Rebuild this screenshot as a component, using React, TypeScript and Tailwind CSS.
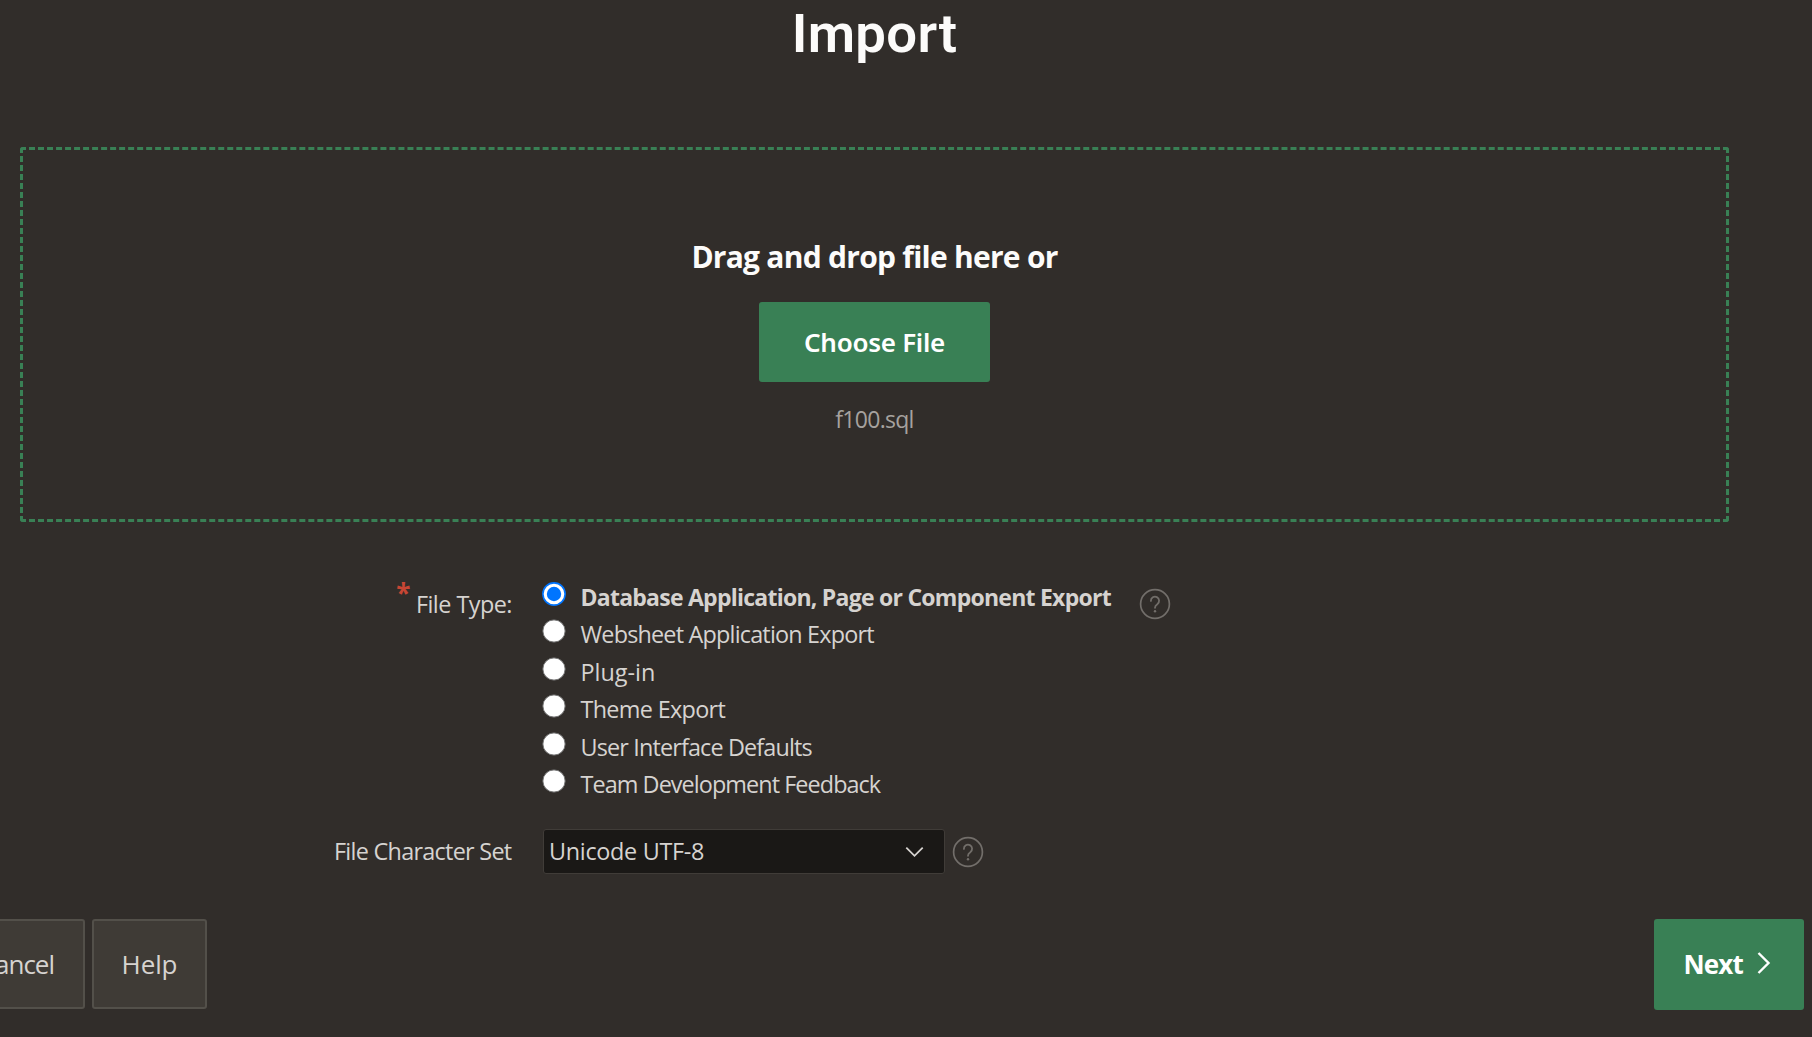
import type { ReactNode } from 'react';

function HelpIcon() {
  return (
    <svg width="32" height="32" viewBox="0 0 32 32" fill="none" stroke="#726e6a" className="shrink-0">
      <circle cx="16" cy="16" r="14.4" strokeWidth="1.7" />
      <path d="M11.9 12.9 a4.1 4.1 0 1 1 6.4 3.3 c-1.5 1-2.3 1.6-2.3 3.6" strokeWidth="1.8" strokeLinecap="round" />
      <circle cx="16" cy="23.3" r="1.2" fill="#726e6a" stroke="none" />
    </svg>
  );
}

function Radio({ checked }: { checked?: boolean }) {
  return (
    <svg width="24" height="24" viewBox="0 0 24 24" className="shrink-0">
      <circle cx="12" cy="12" r="11.1" fill="#fff" stroke={checked ? '#0075ff' : '#767676'} strokeWidth={checked ? 1.6 : 1} />
      {checked && <circle cx="12" cy="12" r="7.2" fill="#0075ff" />}
    </svg>
  );
}

function Option({ height, checked, children }: { height: string; checked?: boolean; children: ReactNode }) {
  return (
    <label className={`flex items-start ${height}`}>
      <Radio checked={checked} />
      <span className="ml-[14.5px] pt-[2px] leading-[26px]">{children}</span>
    </label>
  );
}

export default function App() {
  return (
    <main className="flex h-[1037px] w-[1812px] flex-col overflow-hidden bg-[#312d2a] font-['Open_Sans','Noto_Sans',sans-serif] text-[23.4px] whitespace-nowrap text-[#d6d3d0]">
      <h1 className="h-[147px] w-[1749px] pt-[2px] text-center font-['Roboto',sans-serif] text-[54.5px] leading-[62px] font-semibold tracking-[0.3px] text-[#fcfbfa]">
        Import
      </h1>

      <section className="ml-5 flex h-[375px] w-[1709px] flex-col items-center rounded-[3px] border-[3px] border-dashed border-[#398055] pt-[87px]">
        <p className="text-[30px] leading-[40px] font-bold tracking-[-0.74px] text-[#fcfbfa]">Drag and drop file here or</p>
        <button className="mt-[25px] h-20 w-[231px] rounded-[3px] bg-[#398055] text-center font-['Noto_Sans',sans-serif] text-[26px] leading-[79px] font-semibold tracking-[-0.28px] text-white">
          Choose File
        </button>
        <p className="mt-[22px] text-[23px] leading-[30px] tracking-[-0.7px] text-[#a6a29f]">f100.sql</p>
      </section>

      <section className="flex h-[307px] pt-[60px]">
        <div className="flex w-[542px] justify-end pr-[30px] leading-[32px] tracking-[-0.52px]">
          <span className="mr-[6px] text-[26px] leading-[22px] font-bold text-[#c74634]">*</span>
          <span className="pt-[6px]">File Type:</span>
        </div>
        <div className="w-[570px]">
          <Option height="h-[37px]" checked>
            <b className="text-[23px] tracking-[-0.75px]">Database Application, Page or Component Export</b>
          </Option>
          <Option height="h-[38px]"><span className="tracking-[-0.8px]">Websheet Application Export</span></Option>
          <Option height="h-[37px]"><span className="tracking-[0px]">Plug-in</span></Option>
          <Option height="h-[38px]"><span className="tracking-[-0.68px]">Theme Export</span></Option>
          <Option height="h-[37px]"><span className="tracking-[-0.85px]">User Interface Defaults</span></Option>
          <Option height="h-[38px]"><span className="tracking-[-0.93px]">Team Development Feedback</span></Option>
        </div>
        <div className="ml-[26.5px] pt-[6px]"><HelpIcon /></div>
      </section>

      <div className="flex h-[45px] items-center">
        <div className="w-[542.5px] pr-[31px] text-right tracking-[-0.71px]">File Character Set</div>
        <div className="flex h-[45px] w-[402px] items-center justify-between rounded-[3px] border border-[#403c38] bg-[#1a1816] pr-[20px] pl-[5.5px] tracking-[-0.3px]">
          Unicode UTF-8
          <svg width="19" height="12" viewBox="0 0 19 12" fill="none" stroke="#d6d3d0" strokeWidth="1.8">
            <path d="M1.3 1.6 L9.5 9.8 L17.7 1.6" />
          </svg>
        </div>
        <div className="ml-[7px]"><HelpIcon /></div>
      </div>

      <footer className="mt-[45px] flex items-start text-[26px]">
        <button className="-ml-[52px] h-[90px] w-[137px] rounded-[3px] border-2 border-[#53504a] bg-[#3f3b36] pr-[29px] text-right tracking-[-1px]">Cancel</button>
        <button className="ml-[7px] h-[90px] w-[115px] rounded-[3px] border-2 border-[#53504a] bg-[#3f3b36] tracking-[-0.11px]">Help</button>
        <button className="mr-2 ml-auto flex h-[91px] w-[150px] items-center rounded-[3px] bg-[#398055] pl-[29.5px] font-bold tracking-[-0.84px] text-white">
          Next
          <svg width="15" height="24" viewBox="0 0 15 24" fill="none" stroke="#fff" strokeWidth="2.4" className="-mt-[3px] ml-[14.5px]">
            <path d="M1.5 2 L11.5 12 L1.5 22" />
          </svg>
        </button>
      </footer>
    </main>
  );
}
